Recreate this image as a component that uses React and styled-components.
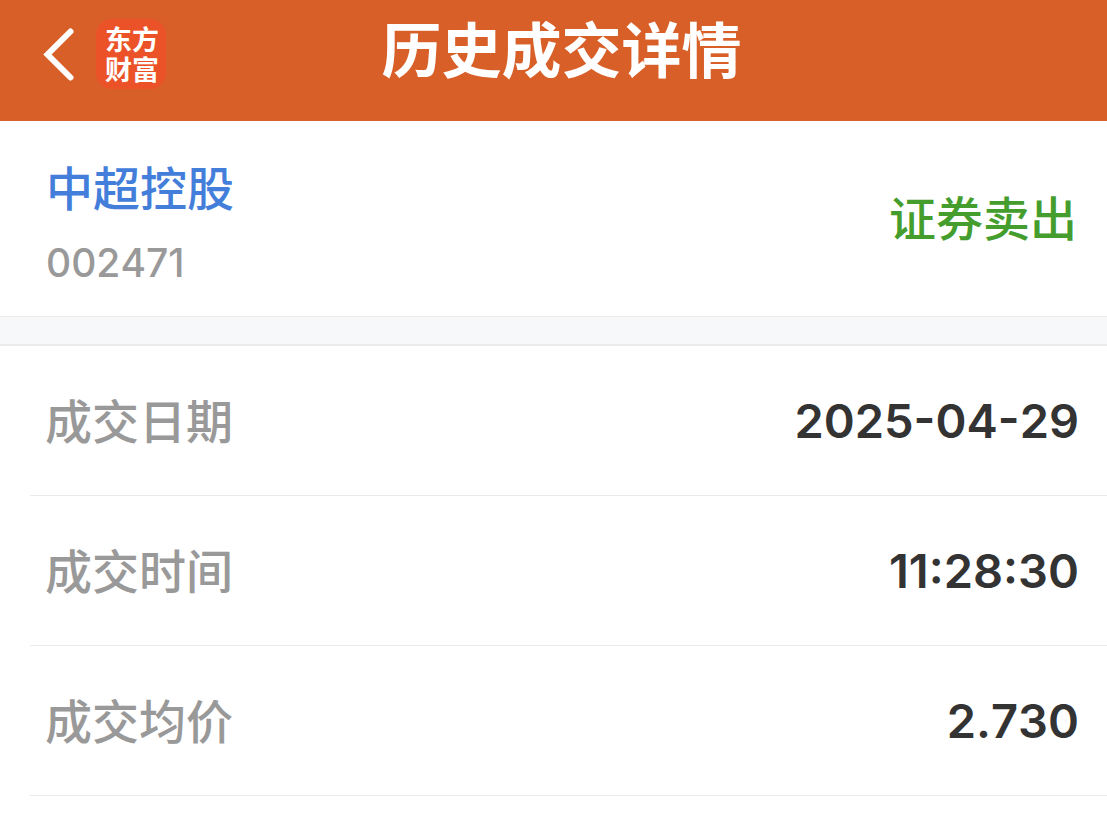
import styled, { createGlobalStyle } from "styled-components";

const GlobalStyle = createGlobalStyle`
    * {
        box-sizing: border-box;
    }

    body {
        margin: 0;
        background: #fff;
        font-family: Inter, "Noto Sans CJK SC", sans-serif;
        font-kerning: none;
    }
`;

const Header = styled.header`
    display: grid;
    grid-template-columns: 1fr auto 1fr;
    align-items: center;
    height: 121px;
    padding: 0 24px 14px 40px;
    background: #d85f28;
    color: #fff;
`;

const HeaderLeft = styled.div`
    display: flex;
    align-items: center;
    gap: 20px;
`;

const BackButton = styled.button`
    display: flex;
    padding: 0;
    border: none;
    background: none;
    color: inherit;
    cursor: pointer;
`;

const Logo = styled.a`
    width: 70px;
    height: 70px;
    padding: 5px 6px 5px 9px;
    border-radius: 16px;
    background: #eb5228;
    color: #fff;
    font-family: "Noto Sans CJK SC", sans-serif;
    font-size: 27px;
    font-weight: 700;
    line-height: 30px;
    text-decoration: none;
`;

const Title = styled.h1`
    margin: 0;
    padding-bottom: 6px;
    font-size: 60px;
    font-weight: 700;
    line-height: 88px;
`;

const Stock = styled.section`
    display: flex;
    align-items: center;
    justify-content: space-between;
    height: 195px;
    padding: 0 30px 0 46px;
`;

const StockInfo = styled.div`
    padding-top: 16px;
`;

const StockName = styled.h2`
    margin: 0;
    color: #447edb;
    font-size: 47px;
    font-weight: 500;
    line-height: 72px;
`;

const StockCode = styled.p`
    margin: 0;
    color: #999;
    font-size: 39px;
    font-weight: 500;
    line-height: 76px;
`;

const Side = styled.strong`
    color: #449d2d;
    font-size: 47px;
    font-weight: 500;
    line-height: 72px;
`;

const Divider = styled.div`
    height: 30px;
    border-top: 1px solid #ebebeb;
    border-bottom: 2px solid #ebebeb;
    background: #f7f8fa;
`;

const Details = styled.dl`
    margin: 0;
    padding-left: 30px;
`;

const Row = styled.div`
    display: flex;
    align-items: center;
    justify-content: space-between;
    height: 150px;
    padding: 0 28px 0 15px;
    border-bottom: 1px solid #ebebeb;
`;

const Label = styled.dt`
    padding-bottom: 4px;
    color: #999;
    font-size: 47px;
    font-weight: 500;
`;

const Value = styled.dd`
    margin: 0;
    color: #333;
    font-size: 47px;
    font-weight: 600;
`;

const rows = [
    { label: "成交日期", value: "2025-04-29" },
    { label: "成交时间", value: "11:28:30" },
    { label: "成交均价", value: "2.730" },
];

export default function App() {
    return (
        <>
            <GlobalStyle />
            <Header>
                <HeaderLeft>
                    <BackButton aria-label="返回">
                        <svg width="36" height="56" viewBox="0 0 36 56" fill="none">
                            <path
                                d="M30.5 5.5L7.5 28.5L30.5 51.5"
                                stroke="currentColor"
                                strokeWidth="6"
                                strokeLinecap="round"
                            />
                        </svg>
                    </BackButton>
                    <Logo href="#">东方财富</Logo>
                </HeaderLeft>
                <Title>历史成交详情</Title>
            </Header>
            <main>
                <Stock>
                    <StockInfo>
                        <StockName>中超控股</StockName>
                        <StockCode>002471</StockCode>
                    </StockInfo>
                    <Side>证券卖出</Side>
                </Stock>
                <Divider />
                <Details>
                    {rows.map((row) => (
                        <Row key={row.label}>
                            <Label>{row.label}</Label>
                            <Value>{row.value}</Value>
                        </Row>
                    ))}
                </Details>
            </main>
        </>
    );
}
